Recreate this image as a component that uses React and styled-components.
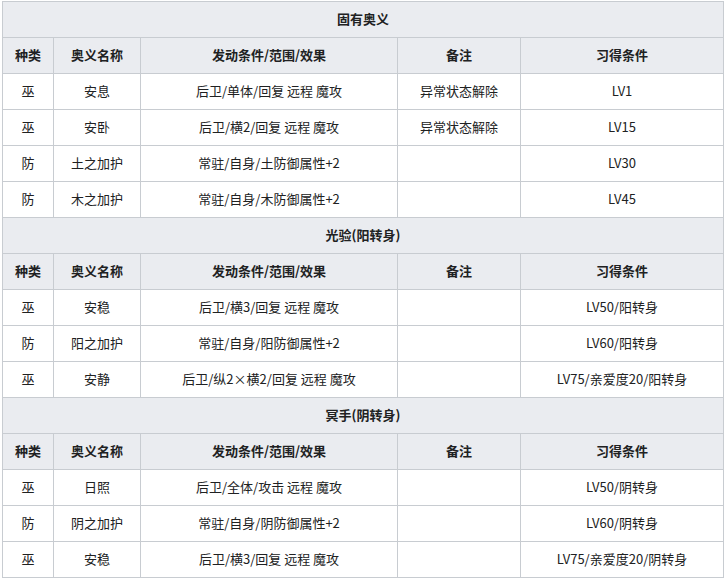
import React from "react";
import styled, { createGlobalStyle } from "styled-components";

const Global = createGlobalStyle`
  html, body { margin: 0; padding: 0; background: #fff; }
  body { font-family: "Noto Sans CJK SC", "Noto Sans", sans-serif; color: #202122; }
`;

const Table = styled.table`
  margin: 1px 0 0 2px;
  width: 721px;
  border-collapse: collapse;
  table-layout: fixed;
  font-size: 13px;
  line-height: 1.4;
  background: #fff;
`;

const Col = styled.col`
  width: ${(p) => p.$w}px;
`;

const Row = styled.tr`
  height: 36px;
`;

const Cell = styled.td`
  border: 1px solid #c8ccd1;
  padding: 0 4px;
  text-align: center;
  vertical-align: middle;
  white-space: nowrap;
  overflow: hidden;
`;

const Head = styled.th`
  border: 1px solid #c8ccd1;
  padding: 0 4px;
  text-align: center;
  vertical-align: middle;
  background: #eaecf0;
  font-weight: bold;
  white-space: nowrap;
`;

const colWidths = [51, 87, 257, 123, 203];

const sections = [
  {
    title: "固有奥义",
    rows: [
      ["巫", "安息", "后卫/单体/回复 远程 魔攻", "异常状态解除", "LV1"],
      ["巫", "安卧", "后卫/横2/回复 远程 魔攻", "异常状态解除", "LV15"],
      ["防", "土之加护", "常驻/自身/土防御属性+2", "", "LV30"],
      ["防", "木之加护", "常驻/自身/木防御属性+2", "", "LV45"],
    ],
  },
  {
    title: "光验(阳转身)",
    rows: [
      ["巫", "安稳", "后卫/横3/回复 远程 魔攻", "", "LV50/阳转身"],
      ["防", "阳之加护", "常驻/自身/阳防御属性+2", "", "LV60/阳转身"],
      ["巫", "安静", "后卫/纵2×横2/回复 远程 魔攻", "", "LV75/亲爱度20/阳转身"],
    ],
  },
  {
    title: "冥手(阴转身)",
    rows: [
      ["巫", "日照", "后卫/全体/攻击 远程 魔攻", "", "LV50/阴转身"],
      ["防", "阴之加护", "常驻/自身/阴防御属性+2", "", "LV60/阴转身"],
      ["巫", "安稳", "后卫/横3/回复 远程 魔攻", "", "LV75/亲爱度20/阴转身"],
    ],
  },
];

const headers = ["种类", "奥义名称", "发动条件/范围/效果", "备注", "习得条件"];

export default function App() {
  return (
    <>
      <Global />
      <Table>
        <colgroup>
          {colWidths.map((w, i) => (
            <Col key={i} $w={w} />
          ))}
        </colgroup>
        <tbody>
          {sections.map((s) => (
            <React.Fragment key={s.title}>
              <Row>
                <Head colSpan={5}>{s.title}</Head>
              </Row>
              <Row>
                {headers.map((h) => (
                  <Head key={h}>{h}</Head>
                ))}
              </Row>
              {s.rows.map((r, i) => (
                <Row key={i}>
                  {r.map((c, j) => (
                    <Cell key={j}>{c}</Cell>
                  ))}
                </Row>
              ))}
            </React.Fragment>
          ))}
        </tbody>
      </Table>
    </>
  );
}
